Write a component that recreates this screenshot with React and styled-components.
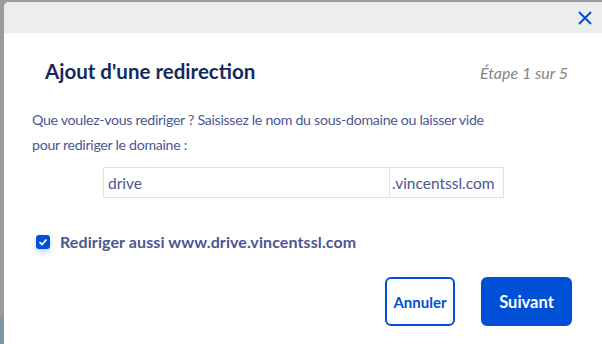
import React from 'react';
import styled, { createGlobalStyle } from 'styled-components';

const GlobalStyle = createGlobalStyle`
  html, body {
    margin: 0;
    padding: 0;
    overflow: hidden;
  }
  body {
    font-family: Lato, "Noto Sans", sans-serif;
  }
`;

const Backdrop = styled.div`
  width: 602px;
  height: 344px;
  box-sizing: border-box;
  padding: 2px 0 0 4px;
  overflow: hidden;
  background: linear-gradient(to bottom, #9b9b9b 0, #9b9b9b 317px, #7d98a0 317px);
  display: flex;
`;

const Modal = styled.div`
  flex: 1;
  background: #ffffff;
  border-top-left-radius: 5px;
  display: flex;
  flex-direction: column;
  overflow: hidden;
`;

const Header = styled.div`
  height: 31px;
  background: #eceeed;
  display: flex;
  align-items: center;
  justify-content: flex-end;
  padding-right: 9px;
`;

const CloseButton = styled.button`
  border: none;
  background: transparent;
  padding: 0;
  width: 16px;
  height: 16px;
  display: flex;
  align-items: center;
  justify-content: center;
  cursor: pointer;
`;

const Body = styled.div`
  padding: 26px 30px 0 28px;
  display: flex;
  flex-direction: column;
`;

const TitleRow = styled.div`
  display: flex;
  align-items: baseline;
  justify-content: space-between;
  padding: 0 4px 0 13px;
`;

const Title = styled.h2`
  margin: 0;
  font-size: 20.5px;
  font-weight: 700;
  color: #142a5c;
`;

const Step = styled.span`
  font-size: 16px;
  font-style: italic;
  color: #858585;
`;

const Text = styled.p`
  margin: 24px 0 0;
  font-size: 14.2px;
  letter-spacing: -0.3px;
  line-height: 25px;
  color: #4d5693;
`;

const InputGroup = styled.div`
  margin: 10px 0 0 71px;
  width: 401px;
  height: 31px;
  box-sizing: border-box;
  border: 1px solid #bdeefc;
  display: flex;
`;

const Input = styled.input`
  flex: 1;
  min-width: 0;
  border: none;
  border-right: 1px solid #bdeefc;
  padding: 0 4px;
  font-family: inherit;
  font-size: 15.5px;
  color: #4d5693;
  outline: none;
`;

const Suffix = styled.span`
  width: 113px;
  box-sizing: border-box;
  display: flex;
  align-items: center;
  padding-left: 2px;
  font-size: 15.5px;
  color: #4d5693;
`;

const CheckRow = styled.label`
  margin: 34px 0 0 4px;
  display: flex;
  align-items: center;
  gap: 10px;
  font-size: 16px;
  font-weight: 700;
  letter-spacing: 0.1px;
  color: #4d5693;
`;

const Box = styled.span`
  width: 14px;
  height: 14px;
  border-radius: 3px;
  background: #0050d7;
  box-shadow: 0 3px 6px rgba(0, 80, 215, 0.25);
  display: flex;
  align-items: center;
  justify-content: center;
`;

const Actions = styled.div`
  margin-top: 26px;
  display: flex;
  justify-content: flex-end;
  gap: 26px;
`;

const Button = styled.button`
  height: 49px;
  width: ${({ primary }) => (primary ? '91px' : '70px')};
  padding: 0;
  border-radius: 6px;
  border: 2px solid #0050d7;
  background: ${({ primary }) => (primary ? '#0050d7' : '#ffffff')};
  color: ${({ primary }) => (primary ? '#ffffff' : '#0050d7')};
  font-family: inherit;
  font-size: ${({ primary }) => (primary ? '16.5px' : '15px')};
  font-weight: 700;
  cursor: pointer;
`;

const App = () => (
  <>
    <GlobalStyle />
    <Backdrop>
      <Modal>
        <Header>
          <CloseButton aria-label="Fermer">
            <svg width="14" height="14" viewBox="0 0 14 14">
              <path d="M1 1 L13 13 M13 1 L1 13" stroke="#0050d7" strokeWidth="2" fill="none" />
            </svg>
          </CloseButton>
        </Header>
        <Body>
          <TitleRow>
            <Title>Ajout d'une redirection</Title>
            <Step>Étape 1 sur 5</Step>
          </TitleRow>
          <Text>
            Que voulez-vous rediriger ? Saisissez le nom du sous-domaine ou laisser vide
            <br />
            pour rediriger le domaine :
          </Text>
          <InputGroup>
            <Input defaultValue="drive" />
            <Suffix>.vincentssl.com</Suffix>
          </InputGroup>
          <CheckRow>
            <Box>
              <svg width="10" height="10" viewBox="0 0 10 10">
                <path d="M1.5 5.2 L4 7.5 L8.5 2.5" stroke="#ffffff" strokeWidth="1.8" fill="none" />
              </svg>
            </Box>
            Rediriger aussi www.drive.vincentssl.com
          </CheckRow>
          <Actions>
            <Button>Annuler</Button>
            <Button primary>Suivant</Button>
          </Actions>
        </Body>
      </Modal>
    </Backdrop>
  </>
);

export default App;
